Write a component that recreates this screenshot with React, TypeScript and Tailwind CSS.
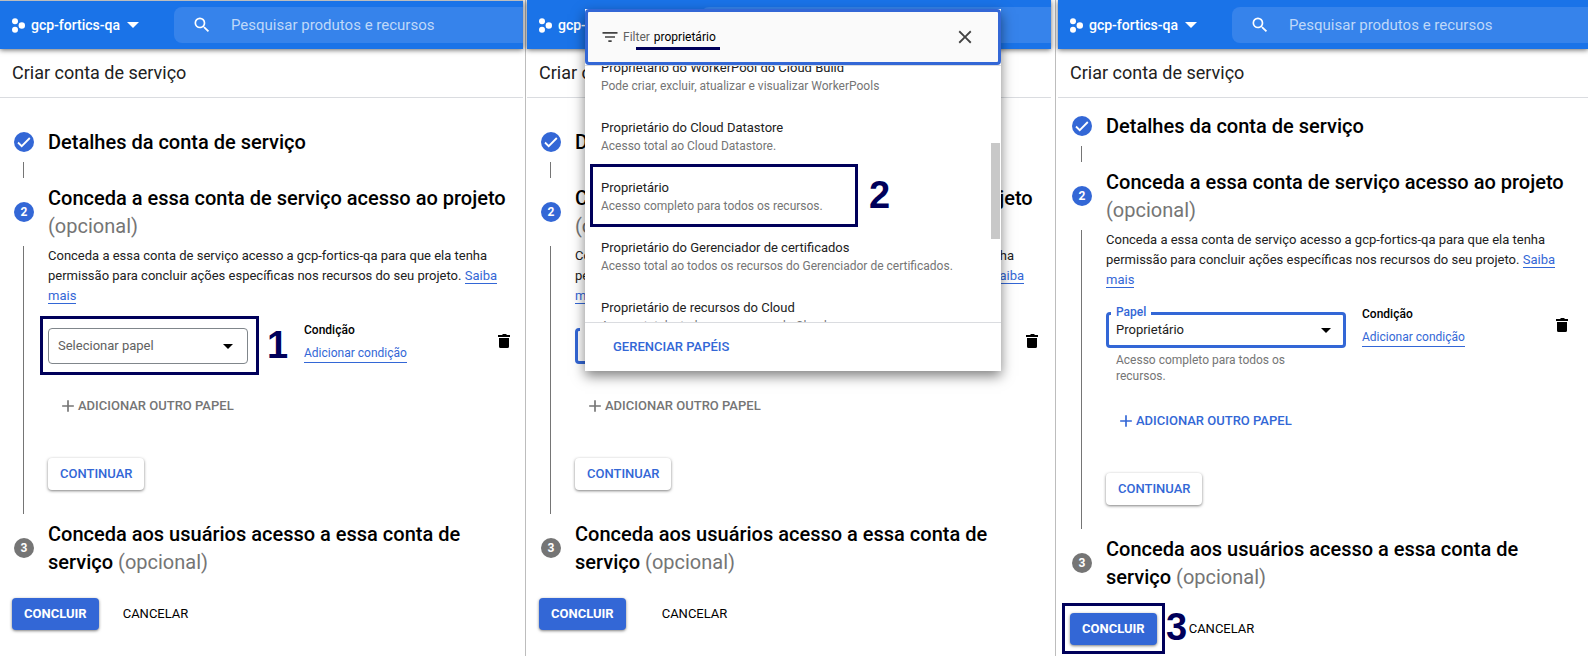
import type { ReactNode } from "react";
import { MdAdd, MdClose, MdFilterList, MdSearch } from "react-icons/md";

const roles = [
  {
    name: "Proprietário do WorkerPool do Cloud Build",
    description: "Pode criar, excluir, atualizar e visualizar WorkerPools",
  },
  {
    name: "Proprietário do Cloud Datastore",
    description: "Acesso total ao Cloud Datastore.",
  },
  {
    name: "Proprietário",
    description: "Acesso completo para todos os recursos.",
    marked: true,
  },
  {
    name: "Proprietário do Gerenciador de certificados",
    description: "Acesso total ao todos os recursos do Gerenciador de certificados.",
  },
  {
    name: "Proprietário de recursos do Cloud",
    description: "Acesso total a todos os recursos do Cloud.",
  },
];

function Caret({ className }: { className: string }) {
  return (
    <svg viewBox="0 0 12 6" fill="currentColor" className={className} aria-hidden="true">
      <path d="M0 0h12L6 6z" />
    </svg>
  );
}

function Mark({ children, className }: { children: ReactNode; className: string }) {
  return (
    <span
      className={`absolute font-['Liberation_Sans',sans-serif] text-[38px] leading-10 font-bold text-[#00005a] ${className}`}
    >
      {children}
    </span>
  );
}

function TopBar({ outlined }: { outlined: boolean }) {
  return (
    <header
      className={`relative flex h-[49px] items-center border-t bg-[#1a73e8] pl-3 text-white shadow-[0_1px_5px_rgba(0,0,0,0.6)] ${
        outlined ? "border-[#bdbdbd]" : "border-[#1a73e8]"
      }`}
    >
      <button type="button" className="flex w-[162px] items-center text-sm font-medium">
        <svg viewBox="0 0 13 15" fill="currentColor" className="mr-[6px] h-[15px] w-[13px]" aria-hidden="true">
          <circle cx="3" cy="3.2" r="3" />
          <circle cx="9.8" cy="7.5" r="3.2" />
          <circle cx="3" cy="11.8" r="3" />
        </svg>
        gcp-fortics-qa
        <Caret className="ml-[7px] h-[6px] w-3" />
      </button>
      <label className="flex h-9 min-w-0 flex-1 items-center rounded-l-lg bg-[#3683eb] pl-[18px]">
        <MdSearch className="mr-[19px] size-5 shrink-0" />
        <input
          type="search"
          aria-label="Pesquisar"
          placeholder="Pesquisar produtos e recursos"
          className="min-w-0 flex-1 bg-transparent text-[15px] outline-none placeholder:text-[#bfd8f9]"
        />
      </label>
    </header>
  );
}

function StepHeader({ badge, done, children }: { badge: ReactNode; done?: boolean; children: ReactNode }) {
  return (
    <div className="flex items-center gap-[14px]">
      <span
        className={`flex size-5 shrink-0 items-center justify-center rounded-full text-xs font-bold text-white ${
          done ? "bg-[#3367d6]" : "bg-[#757575]"
        }`}
      >
        {badge}
      </span>
      <h2 className="text-xl leading-7 font-medium text-black">{children}</h2>
    </div>
  );
}

function Optional() {
  return <span className="font-normal text-[#757575]">(opcional)</span>;
}

function RoleField({ state }: { state: "empty" | "open" | "filled" }) {
  const empty = state === "empty";
  return (
    <div className="w-60 shrink-0 pt-2">
      <div className={`relative ${state === "filled" ? "w-60" : "w-[200px]"}`}>
        {state === "filled" && (
          <label htmlFor="role-filled" className="absolute -top-2 left-[5px] bg-white px-[5px] text-xs leading-4 font-medium text-[#3367d6]">
            Papel
          </label>
        )}
        {state === "open" && <span className="absolute top-0 left-[5px] h-1 w-10 bg-white" />}
        <select
          id={`role-${state}`}
          aria-label="Papel"
          className={`block h-9 w-full appearance-none rounded bg-transparent pr-10 text-[13px] outline-none ${
            empty
              ? "border border-[#80868b] pl-[9px] text-[#616161]"
              : "border-3 border-[#3367d6] pl-[7px] text-[#212121]"
          }`}
        >
          <option>{state === "filled" ? "Proprietário" : "Selecionar papel"}</option>
        </select>
        <Caret className="pointer-events-none absolute top-4 right-[15px] h-[5px] w-[10px] text-black" />
        {empty && (
          <>
            <span className="absolute -top-3 -right-[11px] -bottom-[11px] -left-2 border-3 border-[#00005a]" />
            <Mark className="-top-[3px] left-[219px]">1</Mark>
          </>
        )}
      </div>
      <p className="min-h-[5px] pt-1 pr-8 pl-[10px] text-xs leading-4 text-[#757575]">
        {state === "filled" && "Acesso completo para todos os recursos."}
      </p>
    </div>
  );
}

function RoleMenu() {
  return (
    <div className="absolute top-[9px] left-[58px] z-10 w-104 bg-white shadow-[0_5px_12px_rgba(0,0,0,0.5)]">
      <label className="relative flex h-14 items-center rounded border-3 border-[#3367d6] bg-[#fafafa] pr-[22px] pl-3 text-xs">
        <MdFilterList className="mr-[3px] size-5 text-[#424242]" />
        <span className="mr-1 text-[#616161]">Filter</span>
        <input type="text" defaultValue="proprietário" className="min-w-0 flex-1 bg-transparent text-black outline-none" />
        <span className="absolute top-[35px] left-12 h-[3px] w-[84px] bg-[#00005a]" />
        <button type="button" aria-label="Fechar">
          <MdClose className="size-[22px] text-[#424242]" />
        </button>
      </label>
      <div className="relative flex h-[258px] flex-col justify-end overflow-hidden border-y border-[#dadce0]">
        <ul className="-mb-[27px] text-[13px]">
          {roles.map((role) => (
            <li key={role.name} className="relative h-15 pt-[10px] pl-4 leading-[18px]">
              <p className="text-[#212121]">{role.name}</p>
              <p className="text-xs leading-[18px] text-[#757575]">{role.description}</p>
              {role.marked && (
                <>
                  <span className="absolute -top-[5px] left-[5px] h-[63px] w-[268px] border-3 border-[#00005a]" />
                  <Mark className="top-[6px] left-[284px]">2</Mark>
                </>
              )}
            </li>
          ))}
        </ul>
        <span className="absolute top-[77px] right-px h-24 w-[9px] bg-[#c8c8c8]" />
      </div>
      <div className="flex h-12 items-center pl-7">
        <button type="button" className="text-[13px] font-medium text-[#3367d6]">
          GERENCIAR PAPÉIS
        </button>
      </div>
    </div>
  );
}

function Panel({ state }: { state: "empty" | "open" | "filled" }) {
  const filled = state === "filled";
  return (
    <section className="relative min-w-0">
      <TopBar outlined={state === "empty"} />
      <h1 className="border-b border-[#dadce0] pt-[10px] pb-[10px] pl-3 text-lg leading-7 text-[#212121]">
        Criar conta de serviço
      </h1>
      <div className={`pl-[14px] ${filled ? "pt-[14px] pr-[17px]" : "pt-[30px] pr-[10px]"}`}>
        <StepHeader
          done
          badge={
            <svg viewBox="0 0 20 20" fill="none" stroke="currentColor" strokeWidth="1.8" className="size-5" aria-hidden="true">
              <path d="m4 10.500 3.700 3.700L15.800 6" />
            </svg>
          }
        >
          Detalhes da conta de serviço
        </StepHeader>
        <div className="my-[6px] ml-[9px] h-4 border-l border-[#757575]" />
        <StepHeader done badge="2">
          Conceda a essa conta de serviço acesso ao projeto <Optional />
        </StepHeader>
        <div className="my-[6px] ml-[9px] border-l border-[#757575] pb-6 pl-6">
          <p className="text-[13px] leading-5 text-[#212121]">
            Conceda a essa conta de serviço acesso a gcp-fortics-qa para que ela tenha permissão para concluir ações
            específicas nos recursos do seu projeto.{" "}
            <a href="#saiba" className="border-b border-[#3367d6] text-[#3367d6]">
              Saiba mais
            </a>
          </p>
          <div className="mt-[14px] mb-[21px] flex items-start">
            <RoleField state={state} />
            <div className="ml-4 flex flex-1 flex-col items-start gap-1 text-xs leading-5">
              <span className="font-medium text-black">Condição</span>
              <a href="#condicao" className="border-b border-[#3367d6] leading-[18px] text-[#3367d6]">
                Adicionar condição
              </a>
            </div>
            <button type="button" aria-label="Excluir" className="mt-[13px]">
              <svg viewBox="0 0 18 18" fill="black" className="size-[18px]">
                <path d="M3 2h4l1-1h3l1 1h3v2H3zM4 5h10v8.500a1.500 1.500 0 0 1-1.500 1.500h-7A1.500 1.500 0 0 1 4 13.500z" />
              </svg>
            </button>
          </div>
          <button
            type="button"
            className={`ml-[10px] flex h-8 items-center text-[13px] font-medium ${filled ? "text-[#3367d6]" : "text-[#757575]"}`}
          >
            <MdAdd className="size-5" />
            ADICIONAR OUTRO PAPEL
          </button>
          <button
            type="button"
            className="mt-9 h-8 rounded bg-white px-3 text-[13px] font-medium text-[#3367d6] shadow-[0_1px_3px_rgba(0,0,0,0.5)]"
          >
            CONTINUAR
          </button>
        </div>
        <StepHeader badge="3">
          Conceda aos usuários acesso a essa conta de serviço <Optional />
        </StepHeader>
      </div>
      <div className={`mt-[22px] flex items-center pl-3 ${state === "open" ? "gap-9" : filled ? "gap-8" : "gap-6"}`}>
        <div className="relative">
          <button
            type="button"
            className="h-8 rounded bg-[#3367d6] px-3 text-[13px] font-bold text-white shadow-[0_1px_3px_rgba(0,0,0,0.5)]"
          >
            CONCLUIR
          </button>
          {filled && (
            <>
              <span className="absolute -inset-x-2 -top-[10px] -bottom-[9px] border-3 border-[#00005a]" />
              <Mark className="-top-[6px] left-[96px]">3</Mark>
            </>
          )}
        </div>
        <button type="button" className="text-[13px] text-black">
          CANCELAR
        </button>
      </div>
      {state === "open" && <RoleMenu />}
    </section>
  );
}

export default function App() {
  return (
    <main className="grid min-h-screen grid-cols-[526fr_530fr_532fr] bg-white font-[Roboto,sans-serif]">
      <div className="border-r border-[#bdbdbd] pr-0.5">
        <Panel state="empty" />
      </div>
      <div className="border-r border-[#bdbdbd] pr-1 pl-px">
        <Panel state="open" />
      </div>
      <div className="pl-0.5">
        <Panel state="filled" />
      </div>
    </main>
  );
}
